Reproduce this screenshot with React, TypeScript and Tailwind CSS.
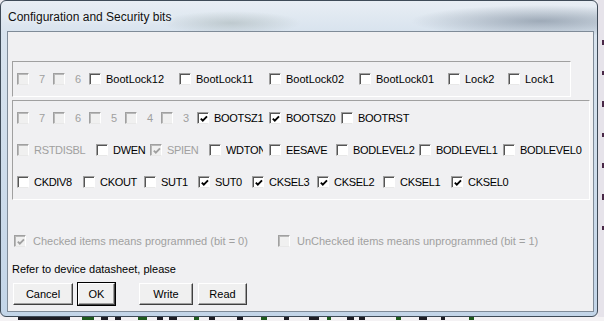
type Item = { label: string; w: string; checked?: boolean; off?: boolean; digit?: boolean; clip?: boolean }

const LOCK_ROW: Item[] = [
  { label: '7', w: 'w-[36px]', off: true, digit: true },
  { label: '6', w: 'w-[36px]', off: true, digit: true },
  { label: 'BootLock12', w: 'w-[90px]' },
  { label: 'BootLock11', w: 'w-[90px]' },
  { label: 'BootLock02', w: 'w-[90px]' },
  { label: 'BootLock01', w: 'w-[89px]' },
  { label: 'Lock2', w: 'w-[60px]' },
  { label: 'Lock1', w: 'w-[50px]' },
]

const HIGH_ROW: Item[] = [
  { label: '7', w: 'w-[36px]', off: true, digit: true },
  { label: '6', w: 'w-[36px]', off: true, digit: true },
  { label: '5', w: 'w-[36px]', off: true, digit: true },
  { label: '4', w: 'w-[36px]', off: true, digit: true },
  { label: '3', w: 'w-[36px]', off: true, digit: true },
  { label: 'BOOTSZ1', w: 'w-[72px]', checked: true },
  { label: 'BOOTSZ0', w: 'w-[72px]', checked: true },
  { label: 'BOOTRST', w: 'w-[80px]' },
]

const EXT_ROW: Item[] = [
  { label: 'RSTDISBL', w: 'w-[79px]', off: true },
  { label: 'DWEN', w: 'w-[54px]' },
  { label: 'SPIEN', w: 'w-[59px]', off: true, checked: true },
  { label: 'WDTON', w: 'w-[60px]', clip: true },
  { label: 'EESAVE', w: 'w-[67px]' },
  { label: 'BODLEVEL2', w: 'w-[83px]' },
  { label: 'BODLEVEL1', w: 'w-[84px]' },
  { label: 'BODLEVEL0', w: 'w-[90px]' },
]

const LOW_ROW: Item[] = [
  { label: 'CKDIV8', w: 'w-[66px]' },
  { label: 'CKOUT', w: 'w-[61px]' },
  { label: 'SUT1', w: 'w-[54px]' },
  { label: 'SUT0', w: 'w-[54px]', checked: true },
  { label: 'CKSEL3', w: 'w-[65px]', checked: true },
  { label: 'CKSEL2', w: 'w-[66px]', checked: true },
  { label: 'CKSEL1', w: 'w-[68px]' },
  { label: 'CKSEL0', w: 'w-[60px]', checked: true },
]

// dark bits of the window lying underneath, peeking out at the bottom
const UNDER = [52, 12, 7, 6, 9, 6, 8, 5, 6, 6, 6, 5, 10, 4, 7, 6, 5, 8, 4, 5]
const UNDER_GAP = [18, 12, 7, 7, 17, 10, 6, 17, 10, 22, 18, 17, 20, 8, 16, 5, 31, 18, 14, 24]

function Box({ checked, off }: { checked?: boolean; off?: boolean }) {
  return (
    <span
      className={`w-[12px] h-[12px] shrink-0 flex items-center justify-center border border-t-[#a0a0a0] border-l-[#a0a0a0] border-r-white border-b-[#e8e8e8] ${
        off ? 'bg-[#f0f0f0] shadow-[inset_1px_1px_0_#b9b9b9]' : 'bg-white shadow-[inset_1px_1px_0_#555555]'
      }`}
    >
      {checked && (
        <svg width="8" height="8" viewBox="0 0 8 8" className="ml-[1px] mt-[1px]">
          <polyline points="0.8,3.6 2.8,5.6 7,1.4" fill="none" stroke={off ? '#a0a0a0' : '#000'} strokeWidth="1.9" />
        </svg>
      )}
    </span>
  )
}

function Check({ item }: { item: Item }) {
  const caps = !item.digit && item.label === item.label.toUpperCase()
  return (
    <div className={`flex items-center shrink-0 overflow-hidden ${item.w}`}>
      <Box checked={item.checked} off={item.off} />
      <span
        className={`whitespace-nowrap ${item.digit ? 'ml-[10px]' : 'ml-[5px]'} ${caps ? 'tracking-[-0.3px]' : ''} ${
          item.clip ? 'w-[37px] overflow-hidden' : ''
        } ${item.off ? 'text-[#a0a0a0]' : 'text-black'}`}
      >
        {item.label}
      </span>
    </div>
  )
}

function Row({ items, h }: { items: Item[]; h: string }) {
  return (
    <div className={`flex items-center pl-[4px] ${h}`}>
      {items.map((it, i) => (
        <Check key={i} item={it} />
      ))}
    </div>
  )
}

function Button({ label, w, primary }: { label: string; w: string; primary?: boolean }) {
  return (
    <div className={`h-[24px] ${w} ${primary ? 'border border-black' : 'border border-transparent'}`}>
      <div className="h-full w-full border border-t-white border-l-white border-r-[#404040] border-b-[#404040] bg-[#f0f0f0] shadow-[inset_-1px_-1px_0_#a0a0a0] flex items-center justify-center text-black">
        {label}
      </div>
    </div>
  )
}

export default function App() {
  return (
    <div className="w-[604px] h-[321px] overflow-hidden bg-[#ecebf0] flex flex-col font-['Liberation_Sans',Arial,sans-serif] text-[11px] leading-none">
      <div className="flex h-[317px] shrink-0">
        {/* dialog window */}
        <div className="w-[598px] h-[317px] shrink-0 rounded-[6px] border border-[#3f4b58] bg-[radial-gradient(ellipse_70px_12px_at_230px_22px,rgba(120,135,130,0.3),transparent),radial-gradient(ellipse_130px_16px_at_540px_20px,rgba(95,110,128,0.5),transparent),linear-gradient(180deg,#e8eef4_0%,#d8e3ee_10%,#c3d5e8_100%)] flex flex-col pl-[6px] pr-[3px] pb-[4px]">
          <div className="h-[30px] shrink-0 flex items-center pl-[1px] pt-[1px] text-[12px] text-[#111] [text-shadow:0_0_6px_#fff]">
            Configuration and Security bits
          </div>
          <div className="flex-1 border border-[#7f8b98] bg-[#f0f0f2] flex flex-col">
            <div className="pl-[4px] pt-[29px]">
              <div className="w-[559px] h-[36px] border border-t-[#a0a0a0] border-l-[#a0a0a0] border-r-white border-b-white flex items-center">
                <Row items={LOCK_ROW} h="h-[34px]" />
              </div>
              <div className="mt-[3px] w-[578px] h-[100px] border border-t-[#a0a0a0] border-l-[#a0a0a0] border-r-white border-b-white flex flex-col pt-[1px]">
                <Row items={HIGH_ROW} h="h-[32px]" />
                <Row items={EXT_ROW} h="h-[32px]" />
                <Row items={LOW_ROW} h="h-[32px]" />
              </div>
            </div>

            <div className="flex items-center h-[16px] mt-[33px] pl-[6px] text-[#a0a0a0]">
              <div className="flex items-center w-[264px] shrink-0">
                <Box checked off />
                <span className="ml-[7px] whitespace-nowrap">Checked items means programmed (bit = 0)</span>
              </div>
              <div className="flex items-center">
                <Box off />
                <span className="ml-[7px] whitespace-nowrap">UnChecked items means unprogrammed (bit = 1)</span>
              </div>
            </div>

            <div className="h-[16px] mt-[12px] pl-[4px] flex items-center text-black">
              Refer to device datasheet, please
            </div>

            <div className="flex mt-[5px] pl-[4px]">
              <Button label="Cancel" w="w-[62px]" />
              <div className="ml-[3px]">
                <Button label="OK" w="w-[39px]" primary />
              </div>
              <div className="ml-[22px]">
                <Button label="Write" w="w-[56px]" />
              </div>
              <div className="ml-[3px]">
                <Button label="Read" w="w-[51px]" />
              </div>
            </div>
          </div>
        </div>
        {/* desktop behind, right edge */}
        <div className="flex-1 bg-[#e6e3ea] flex flex-col items-end gap-[26px] pt-[40px]">
          <span className="w-[2px] h-[5px] bg-[#4a2848]" />
          <span className="w-[2px] h-[4px] bg-[#4a2848]" />
          <span className="w-[2px] h-[6px] bg-[#4a2848]" />
          <span className="w-[2px] h-[4px] bg-[#4a2848]" />
          <span className="w-[2px] h-[5px] bg-[#4a2848]" />
          <span className="w-[2px] h-[6px] bg-[#4a2848]" />
          <span className="w-[2px] h-[4px] bg-[#4a2848]" />
        </div>
      </div>
      {/* desktop behind, bottom edge */}
      <div className="flex-1 bg-[#f4f2f4] flex items-start">
        {UNDER.map((w, i) => (
          <span
            key={i}
            className={`h-[3px] shrink-0 ${i % 3 === 1 ? 'bg-[#1e5a1e]' : 'bg-[#1d1d24]'}`}
            style={{ width: w, marginLeft: UNDER_GAP[i] }}
          />
        ))}
      </div>
    </div>
  )
}
